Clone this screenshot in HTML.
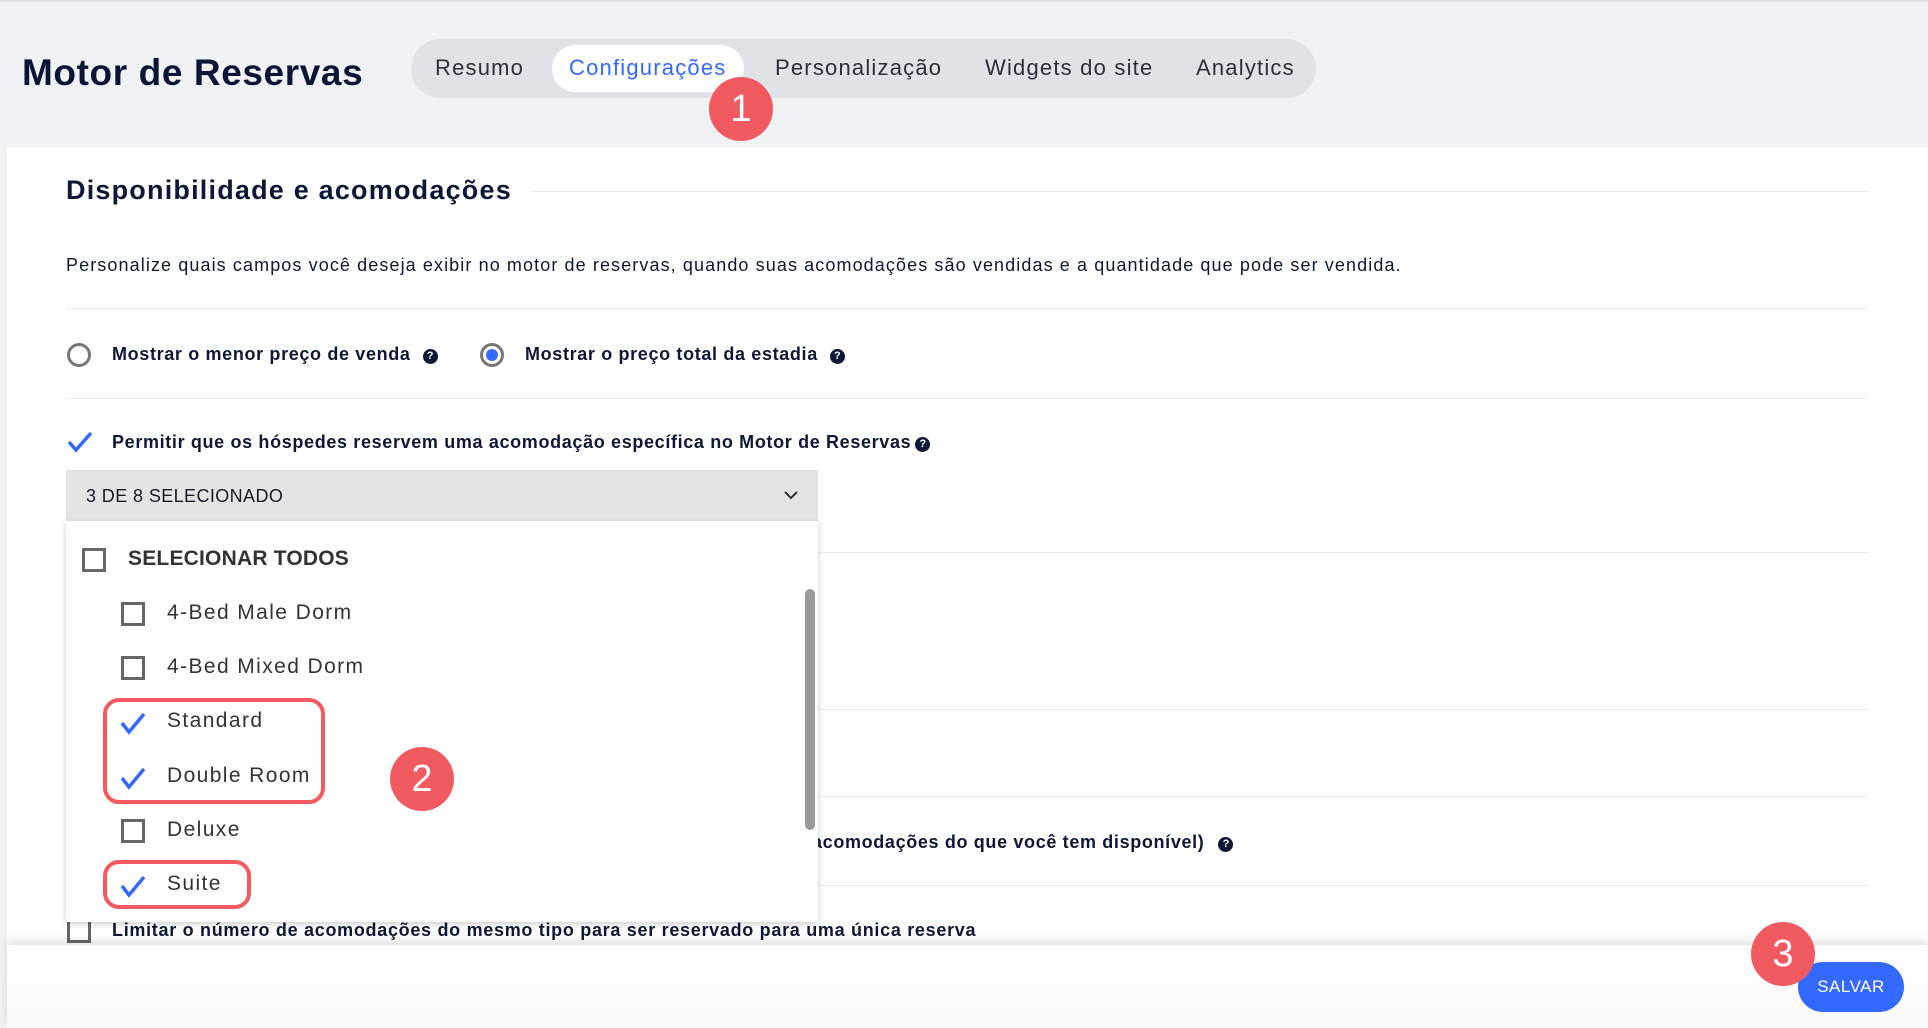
<!DOCTYPE html>
<html><head><meta charset="utf-8"><style>
*{box-sizing:border-box;margin:0;padding:0}
body{width:1928px;height:1026px;overflow:hidden;background:#f1f2f4;font-family:"Liberation Sans",sans-serif;color:#0d1836;position:relative;border-top:2px solid #dfe1e5}
.a{position:absolute;white-space:nowrap}
.title{left:22px;top:50px;font-size:37px;font-weight:bold;color:#0b1535;letter-spacing:0.6px}
.tabs{left:411px;top:37px;width:905px;height:59px;background:#e1e2e6;border-radius:30px}
.act{left:552px;top:43px;width:192px;height:47px;background:#fff;border-radius:24px}
.tab{top:53px;font-size:22px;color:#2a2f3d;letter-spacing:1.2px}
.badge{position:absolute;width:64px;height:64px;border-radius:50%;background:#f25a62;color:#fff;font-size:38px;text-align:center;line-height:64px}
.panel{left:7px;top:145px;width:1921px;height:881px;background:#fff}
.line{position:absolute;height:1px;background:#e9eaec;left:66px;width:1801px}
.b{font-weight:bold;font-size:18px;letter-spacing:0.65px}
.q{display:inline-block;width:15px;height:15px;border-radius:50%;background:#0d1836;color:#fff;font-size:11px;text-align:center;line-height:15px;font-weight:bold;vertical-align:1px;margin-left:12px;letter-spacing:0}
.cb{position:absolute;width:24px;height:24px;border:3px solid #666;background:#fff}
.item{font-size:21px;color:#333;letter-spacing:1.4px}
.red{position:absolute;border:4px solid #f25a62;border-radius:16px}
</style></head><body>
<div class="a title">Motor de Reservas</div>
<div class="a tabs"></div>
<div class="a act"></div>
<div class="a tab" style="left:435px">Resumo</div>
<div class="a tab" style="left:569px;color:#3469ff">Configurações</div>
<div class="a tab" style="left:775px">Personalização</div>
<div class="a tab" style="left:985px">Widgets do site</div>
<div class="a tab" style="left:1196px">Analytics</div>
<div class="badge" style="left:709px;top:75px">1</div>

<div class="a panel"></div>
<div class="a" style="left:66px;top:173px;font-size:27px;font-weight:bold;letter-spacing:1.2px">Disponibilidade e acomodações</div>
<div class="line" style="left:532px;width:1335px;top:189px"></div>
<div class="a" style="left:66px;top:253px;font-size:18px;letter-spacing:1.1px">Personalize quais campos você deseja exibir no motor de reservas, quando suas acomodações são vendidas e a quantidade que pode ser vendida.</div>
<div class="line" style="top:306px"></div>

<div class="a" style="left:67px;top:341px;width:24px;height:24px;border:3px solid #777;border-radius:50%"></div>
<div class="a b" style="left:112px;top:342px">Mostrar o menor preço de venda<span class="q">?</span></div>
<div class="a" style="left:480px;top:341px;width:24px;height:24px;border:3px solid #777;border-radius:50%"><div style="margin:3px;width:12px;height:12px;border-radius:50%;background:#3469ff"></div></div>
<div class="a b" style="left:525px;top:342px">Mostrar o preço total da estadia<span class="q">?</span></div>
<div class="line" style="top:396px"></div>

<svg class="a" style="left:66px;top:428px" width="28" height="24"><path d="M3 12 L10 20 L25 3" stroke="#3469ff" stroke-width="3.5" fill="none"/></svg>
<div class="a b" style="left:112px;top:430px">Permitir que os hóspedes reservem uma acomodação específica no Motor de Reservas<span class="q" style="margin-left:4px">?</span></div>

<div class="line" style="top:550px"></div>
<div class="line" style="top:707px"></div>
<div class="line" style="top:794px"></div>
<div class="a b" style="left:812px;top:830px">acomodações do que você tem disponível)<span class="q" style="margin-left:14px">?</span></div>
<div class="line" style="top:883px"></div>
<div class="cb" style="left:67px;top:917px"></div>
<div class="a b" style="left:112px;top:918px;letter-spacing:0.7px">Limitar o número de acomodações do mesmo tipo para ser reservado para uma única reserva</div>

<div class="a" style="left:66px;top:468px;width:752px;height:51px;background:#e4e4e4"></div>
<div class="a" style="left:86px;top:484px;font-size:18px;color:#1a1a2a;letter-spacing:0.4px">3 DE 8 SELECIONADO</div>
<svg class="a" style="left:783px;top:487px" width="16" height="12"><path d="M2 3 L8 9 L14 3" stroke="#333" stroke-width="2" fill="none"/></svg>
<div class="a" style="left:66px;top:519px;width:752px;height:401px;background:#fff;box-shadow:0 2px 6px rgba(0,0,0,.2)"></div>
<div class="cb" style="left:82px;top:546px"></div>
<div class="a item" style="left:128px;top:545px;font-weight:bold;letter-spacing:0.2px">SELECIONAR TODOS</div>
<div class="cb" style="left:121px;top:600px"></div>
<div class="a item" style="left:167px;top:599px">4-Bed Male Dorm</div>
<div class="cb" style="left:121px;top:654px"></div>
<div class="a item" style="left:167px;top:653px">4-Bed Mixed Dorm</div>
<svg class="a" style="left:119px;top:708px" width="28" height="26"><path d="M3 13 L10 22 L25 4" stroke="#3469ff" stroke-width="3.5" fill="none"/></svg>
<div class="a item" style="left:167px;top:707px">Standard</div>
<svg class="a" style="left:119px;top:763px" width="28" height="26"><path d="M3 13 L10 22 L25 4" stroke="#3469ff" stroke-width="3.5" fill="none"/></svg>
<div class="a item" style="left:167px;top:762px">Double Room</div>
<div class="cb" style="left:121px;top:817px"></div>
<div class="a item" style="left:167px;top:816px">Deluxe</div>
<svg class="a" style="left:119px;top:871px" width="28" height="26"><path d="M3 13 L10 22 L25 4" stroke="#3469ff" stroke-width="3.5" fill="none"/></svg>
<div class="a item" style="left:167px;top:870px">Suite</div>
<div class="a" style="left:805px;top:587px;width:10px;height:241px;background:#9a9a9a;border-radius:5px"></div>
<div class="red" style="left:103px;top:696px;width:222px;height:106px"></div>
<div class="red" style="left:103px;top:858px;width:148px;height:49px"></div>
<div class="badge" style="left:390px;top:745px">2</div>

<div class="a" style="left:7px;top:943px;width:1921px;height:83px;background:linear-gradient(#fff,#fafafa);box-shadow:0 -4px 8px rgba(0,0,0,.12)"></div>
<div class="a" style="left:1798px;top:960px;width:106px;height:50px;background:#3469ff;border-radius:25px;color:#fff;font-size:17px;text-align:center;line-height:50px;letter-spacing:.5px">SALVAR</div>
<div class="badge" style="left:1751px;top:920px">3</div>
</body></html>
